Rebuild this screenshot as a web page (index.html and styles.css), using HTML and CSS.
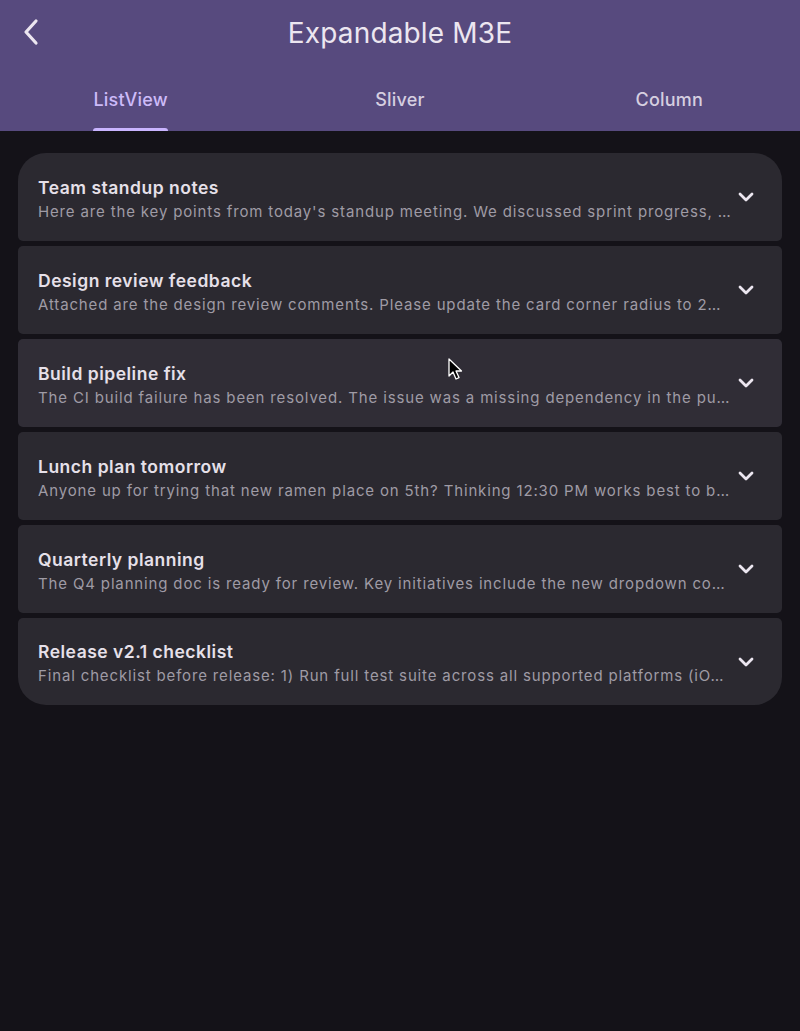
FILE: index.html
```html
<!DOCTYPE html>
<html lang="en">
<head>
<meta charset="utf-8">
<title>Expandable M3E</title>
<link rel="stylesheet" href="styles.css">
</head>
<body>
<div class="app">
  <header class="appbar">
    <div class="toolbar">
      <button class="back" aria-label="Back">
        <svg width="24" height="28" viewBox="0 0 24 28"><path d="M16 3 L6 14 L16 25" fill="none" stroke="#ece6f0" stroke-width="3.2" stroke-linecap="round" stroke-linejoin="round"/></svg>
      </button>
      <h1 class="title">Expandable M3E</h1>
    </div>
    <nav class="tabs">
      <div class="tab active"><span class="tab-label">ListView<span class="indicator"></span></span></div>
      <div class="tab"><span class="tab-label">Sliver</span></div>
      <div class="tab"><span class="tab-label">Column</span></div>
    </nav>
  </header>
  <main class="list">
    <div class="card first">
      <div class="text">
        <div class="card-title">Team standup notes</div>
        <div class="card-sub">Here are the key points from today's standup meeting. We discussed sprint progress, …</div>
      </div>
      <svg class="chev" width="24" height="24" viewBox="0 0 24 24"><path d="M6 9 L12 15 L18 9" fill="none" stroke="#ece6f0" stroke-width="2.8" stroke-linecap="round" stroke-linejoin="round"/></svg>
    </div>
    <div class="card">
      <div class="text">
        <div class="card-title">Design review feedback</div>
        <div class="card-sub">Attached are the design review comments. Please update the card corner radius to 2…</div>
      </div>
      <svg class="chev" width="24" height="24" viewBox="0 0 24 24"><path d="M6 9 L12 15 L18 9" fill="none" stroke="#ece6f0" stroke-width="2.8" stroke-linecap="round" stroke-linejoin="round"/></svg>
    </div>
    <div class="card hover">
      <div class="text">
        <div class="card-title">Build pipeline fix</div>
        <div class="card-sub">The CI build failure has been resolved. The issue was a missing dependency in the pu…</div>
      </div>
      <svg class="chev" width="24" height="24" viewBox="0 0 24 24"><path d="M6 9 L12 15 L18 9" fill="none" stroke="#ece6f0" stroke-width="2.8" stroke-linecap="round" stroke-linejoin="round"/></svg>
    </div>
    <div class="card">
      <div class="text">
        <div class="card-title">Lunch plan tomorrow</div>
        <div class="card-sub">Anyone up for trying that new ramen place on 5th? Thinking 12:30 PM works best to b…</div>
      </div>
      <svg class="chev" width="24" height="24" viewBox="0 0 24 24"><path d="M6 9 L12 15 L18 9" fill="none" stroke="#ece6f0" stroke-width="2.8" stroke-linecap="round" stroke-linejoin="round"/></svg>
    </div>
    <div class="card">
      <div class="text">
        <div class="card-title">Quarterly planning</div>
        <div class="card-sub">The Q4 planning doc is ready for review. Key initiatives include the new dropdown co…</div>
      </div>
      <svg class="chev" width="24" height="24" viewBox="0 0 24 24"><path d="M6 9 L12 15 L18 9" fill="none" stroke="#ece6f0" stroke-width="2.8" stroke-linecap="round" stroke-linejoin="round"/></svg>
    </div>
    <div class="card last">
      <div class="text">
        <div class="card-title">Release v2.1 checklist</div>
        <div class="card-sub">Final checklist before release: 1) Run full test suite across all supported platforms (iO…</div>
      </div>
      <svg class="chev" width="24" height="24" viewBox="0 0 24 24"><path d="M6 9 L12 15 L18 9" fill="none" stroke="#ece6f0" stroke-width="2.8" stroke-linecap="round" stroke-linejoin="round"/></svg>
    </div>
  </main>
  <svg class="cursor" width="16" height="24" viewBox="0 0 16 24"><path d="M1 1 L1 18 L5 14 L8 21 L11 19.6 L8 13 L13.5 13 Z" fill="#000" stroke="#fff" stroke-width="1.3" stroke-linejoin="round"/></svg>
</div>
</body>
</html>
```
FILE: styles.css
```css
* { box-sizing: border-box; }
html, body { margin: 0; padding: 0; }
body {
  background: #141218;
  font-family: Inter, "Noto Sans", sans-serif;
  color: #e6e0e9;
  width: 800px;
  height: 1031px;
  overflow: hidden;
}
.app { position: relative; width: 800px; height: 1031px; }
.appbar {
  background: #574a7e;
  height: 131px;
  display: flex;
  flex-direction: column;
}
.toolbar {
  height: 66px;
  display: flex;
  align-items: center;
  position: relative;
  justify-content: center;
}
.back {
  position: absolute;
  left: 20px;
  top: 18px;
  background: none;
  border: 0;
  padding: 0;
  width: 24px;
  height: 28px;
  display: flex;
}
.title {
  margin: 0;
  font-size: 28px;
  font-weight: 400;
  color: #ece6f0;
  letter-spacing: 0.15px;
  line-height: 34px;
}
.tabs {
  display: grid;
  grid-template-columns: 1fr 1fr 1fr;
  height: 65px;
  margin: 0 -4px;
}
.tab {
  display: flex;
  justify-content: center;
  align-items: stretch;
}
.tab-label {
  position: relative;
  display: flex;
  align-items: center;
  padding-top: 1px;
  font-size: 18px;
  font-weight: 500;
  letter-spacing: 0.2px;
  color: #d6cfe0;
}
.tab.active .tab-label { color: #cdbbf9; }
.indicator {
  position: absolute;
  left: 0;
  right: 0;
  bottom: 0;
  height: 3px;
  background: #c9b4ff;
  border-radius: 3px 3px 0 0;
}
.list {
  padding: 22px 18px;
  display: flex;
  flex-direction: column;
  gap: 5px;
}
.card {
  background: #2b2930;
  height: 88px;
  border-radius: 5px;
  display: flex;
  align-items: center;
  padding: 0 24px 0 20px;
  gap: 4px;
}
.card.first { border-radius: 28px 28px 5px 5px; }
.card.last { border-radius: 5px 5px 28px 28px; height: 87px; }
.card.hover { background: #302d36; }
.text {
  flex: 1;
  min-width: 0;
  display: flex;
  flex-direction: column;
  gap: 3px;
  padding-top: 4px;
}
.card-title {
  font-size: 17.5px;
  font-weight: 600;
  line-height: 22px;
  letter-spacing: 0.5px;
  color: #e6e0e9;
  white-space: nowrap;
}
.card-sub {
  font-size: 15px;
  line-height: 20px;
  letter-spacing: 0.85px;
  color: #9f9ba5;
  white-space: nowrap;
}
.chev { flex: none; }
.cursor {
  position: absolute;
  left: 448px;
  top: 358px;
}
```
